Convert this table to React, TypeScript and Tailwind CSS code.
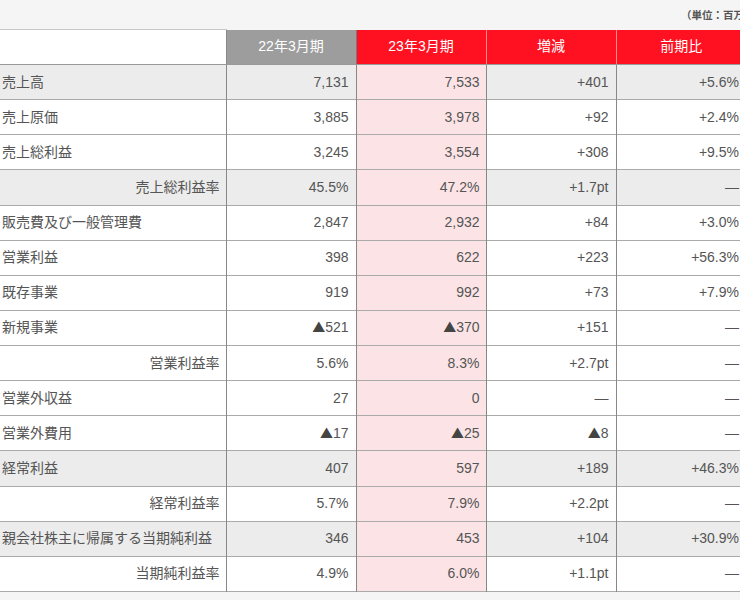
import React from 'react';

type Row = {
    label: string;
    values: [string, string, string, string];
    shaded?: boolean;
    rate?: boolean;
};

const rows: Row[] = [
    { label: '売上高', values: ['7,131', '7,533', '+401', '+5.6%'], shaded: true },
    { label: '売上原価', values: ['3,885', '3,978', '+92', '+2.4%'] },
    { label: '売上総利益', values: ['3,245', '3,554', '+308', '+9.5%'] },
    { label: '売上総利益率', values: ['45.5%', '47.2%', '+1.7pt', '—'], shaded: true, rate: true },
    { label: '販売費及び一般管理費', values: ['2,847', '2,932', '+84', '+3.0%'] },
    { label: '営業利益', values: ['398', '622', '+223', '+56.3%'] },
    { label: '既存事業', values: ['919', '992', '+73', '+7.9%'] },
    { label: '新規事業', values: ['▲521', '▲370', '+151', '—'] },
    { label: '営業利益率', values: ['5.6%', '8.3%', '+2.7pt', '—'], rate: true },
    { label: '営業外収益', values: ['27', '0', '—', '—'] },
    { label: '営業外費用', values: ['▲17', '▲25', '▲8', '—'] },
    { label: '経常利益', values: ['407', '597', '+189', '+46.3%'], shaded: true },
    { label: '経常利益率', values: ['5.7%', '7.9%', '+2.2pt', '—'], rate: true },
    { label: '親会社株主に帰属する当期純利益', values: ['346', '453', '+104', '+30.9%'], shaded: true },
    { label: '当期純利益率', values: ['4.9%', '6.0%', '+1.1pt', '—'], rate: true },
];

const font = { fontFamily: '"Liberation Sans", "Noto Sans CJK JP", sans-serif' };

// negative numbers use a full-width triangle, so give it the CJK face
const Value = ({ v }: { v: string }) =>
    v.startsWith('▲') ? (
        <>
            <span className="font-['Noto_Sans_CJK_JP'] text-[13px] text-[#444]">▲</span>
            {v.slice(1)}
        </>
    ) : (
        <>{v}</>
    );

export default function App() {
    return (
        <div className="w-[740px] h-[600px] overflow-hidden bg-[#f5f5f5]" style={font}>
            <div className="w-[773px] -ml-[8px]">
                {/* Unit note */}
                <div className="h-[29px] flex items-center justify-end text-[10.5px] text-[#555] font-bold pt-[2px]">
                    （単位：百万円）
                </div>

                <table className="w-[754px] border-collapse table-fixed text-[14px] text-[#555]">
                    <colgroup>
                        <col className="w-[234px]" />
                        <col className="w-[130px]" />
                        <col className="w-[130px]" />
                        <col className="w-[130px]" />
                        <col className="w-[130px]" />
                    </colgroup>
                    <thead>
                        <tr className="h-[35px]">
                            <th className="bg-white border-t border-[#c8c8c8] border-b border-b-[#999]"></th>
                            <th className="bg-[#9d9d9d] text-white font-normal border-l border-l-[#888] border-b border-b-[#999]">22年3月期</th>
                            <th className="bg-[#ff1121] text-white font-normal border-l border-l-[#777] border-b border-b-[#999]">23年3月期</th>
                            <th className="bg-[#ff1121] text-white font-normal border-l border-l-[#ff8a92] border-b border-b-[#999]">増減</th>
                            <th className="bg-[#ff1121] text-white font-normal border-l border-l-[#ff8a92] border-b border-b-[#999]">前期比</th>
                        </tr>
                    </thead>
                    <tbody>
                        {rows.map((row) => {
                            const bg = row.shaded ? 'bg-[#ececec]' : 'bg-white';
                            return (
                                <tr key={row.label} className="h-[35.13px] border-b border-[#aaa]">
                                    <td className={`${bg} ${row.rate ? 'text-right pr-[6px]' : 'text-left pl-[10px]'} whitespace-nowrap`}>
                                        {row.label}
                                    </td>
                                    <td className={`${bg} text-right pr-[7px] border-l border-l-[#888]`}><Value v={row.values[0]} /></td>
                                    <td className="bg-[#fce4e6] text-right pr-[6px] border-l border-l-[#888]"><Value v={row.values[1]} /></td>
                                    <td className={`${bg} text-right pr-[7px] border-l border-l-[#888]`}><Value v={row.values[2]} /></td>
                                    <td className={`${bg} text-right pr-[7px] border-l border-l-[#888]`}><Value v={row.values[3]} /></td>
                                </tr>
                            );
                        })}
                    </tbody>
                </table>
            </div>
        </div>
    );
}
